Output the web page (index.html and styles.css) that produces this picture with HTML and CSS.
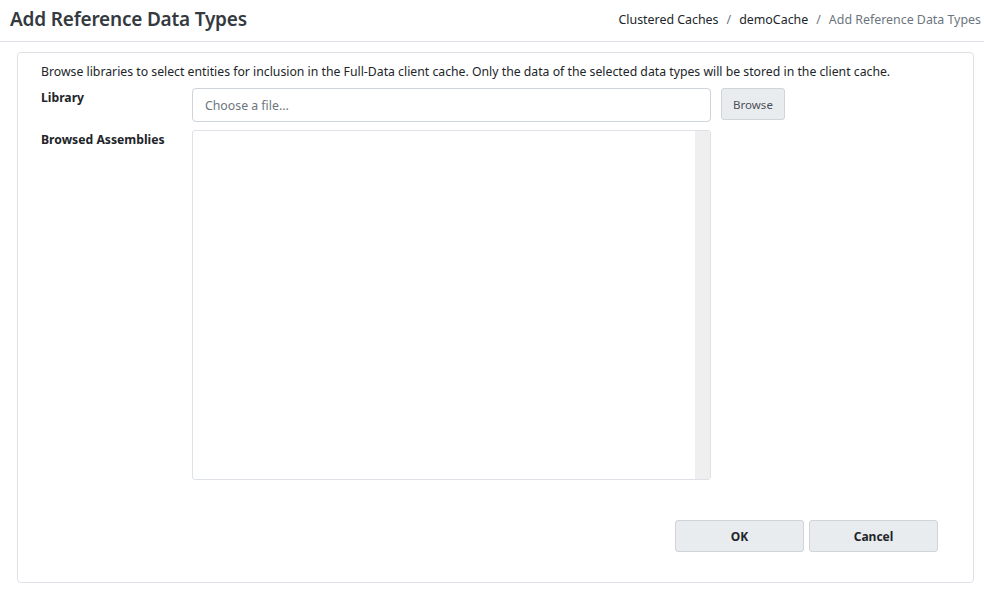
FILE: index.html
```html
<!DOCTYPE html>
<html>
<head>
<meta charset="utf-8">
<link rel="stylesheet" href="styles.css">
</head>
<body>
<div class="header">
  <h1 class="title">Add Reference Data Types</h1>
  <nav class="crumbs">
    <span class="crumb">Clustered Caches</span>
    <span class="sep">/</span>
    <span class="crumb">demoCache</span>
    <span class="sep">/</span>
    <span class="crumb current">Add Reference Data Types</span>
  </nav>
</div>
<div class="main">
  <div class="card">
    <p class="desc">Browse libraries to select entities for inclusion in the Full-Data client cache. Only the data of the selected data types will be stored in the client cache.</p>
    <div class="row">
      <label class="label">Library</label>
      <div class="file-input">Choose a file...</div>
      <button class="btn browse">Browse</button>
    </div>
    <div class="row">
      <label class="label">Browsed Assemblies</label>
      <div class="list"><div class="track"></div></div>
    </div>
    <div class="actions">
      <button class="btn action">OK</button>
      <button class="btn action">Cancel</button>
    </div>
  </div>
</div>
</body>
</html>
```
FILE: styles.css
```css
* { box-sizing: border-box; }
body {
  margin: 0;
  font-family: "Noto Sans", "Open Sans", sans-serif;
  color: #212529;
  background: #fff;
  width: 984px;
  height: 590px;
  overflow: hidden;
}
.header {
  display: flex;
  justify-content: space-between;
  align-items: center;
  height: 42px;
  padding: 0 3px 3px 10px;
  border-bottom: 1px solid #dee2e6;
}
.title {
  margin: 0;
  font-size: 19px;
  font-weight: 600;
  letter-spacing: -0.2px;
  color: #343a40;
}
.crumbs {
  display: flex;
  align-items: center;
  font-size: 12.4px;
  color: #212529;
}
.sep { color: #6c757d; margin: 0 8px; }
.current { color: #6c757d; }
.main {
  padding: 10px 10px 8px 17px;
}
.card {
  height: 531px;
  border: 1px solid #dee2e6;
  border-radius: 4px;
  padding: 9px 23px 0 23px;
  display: flex;
  flex-direction: column;
}
.desc {
  margin: 0 0 6px;
  font-size: 12.25px;
  line-height: 20px;
}
.row {
  display: flex;
  align-items: flex-start;
  margin-bottom: 8px;
}
.label {
  width: 151px;
  flex: none;
  font-weight: 700;
  font-size: 12.2px;
  padding-top: 1px;
}
.file-input {
  width: 519px;
  height: 34px;
  border: 1px solid #ced4da;
  border-radius: 4px;
  padding: 0 12px;
  display: flex;
  align-items: center;
  color: #6c757d;
  font-size: 12.3px;
}
.btn {
  font-family: inherit;
  background: #e9ecef;
  border: 1px solid #ced4da;
  border-radius: 3px;
  color: #212529;
}
.browse {
  margin-left: 10px;
  width: 64px;
  height: 32px;
  font-size: 11.5px;
  color: #495057;
}
.list {
  width: 519px;
  height: 350px;
  border: 1px solid #dee2e6;
  border-radius: 3px;
  display: flex;
  justify-content: flex-end;
}
.track {
  width: 15px;
  background: #efefef;
}
.actions {
  display: flex;
  justify-content: flex-end;
  gap: 5px;
  margin-top: 32px;
  padding-right: 12px;
}
.action {
  width: 129px;
  height: 32px;
  font-weight: 700;
  font-size: 12px;
}
```
